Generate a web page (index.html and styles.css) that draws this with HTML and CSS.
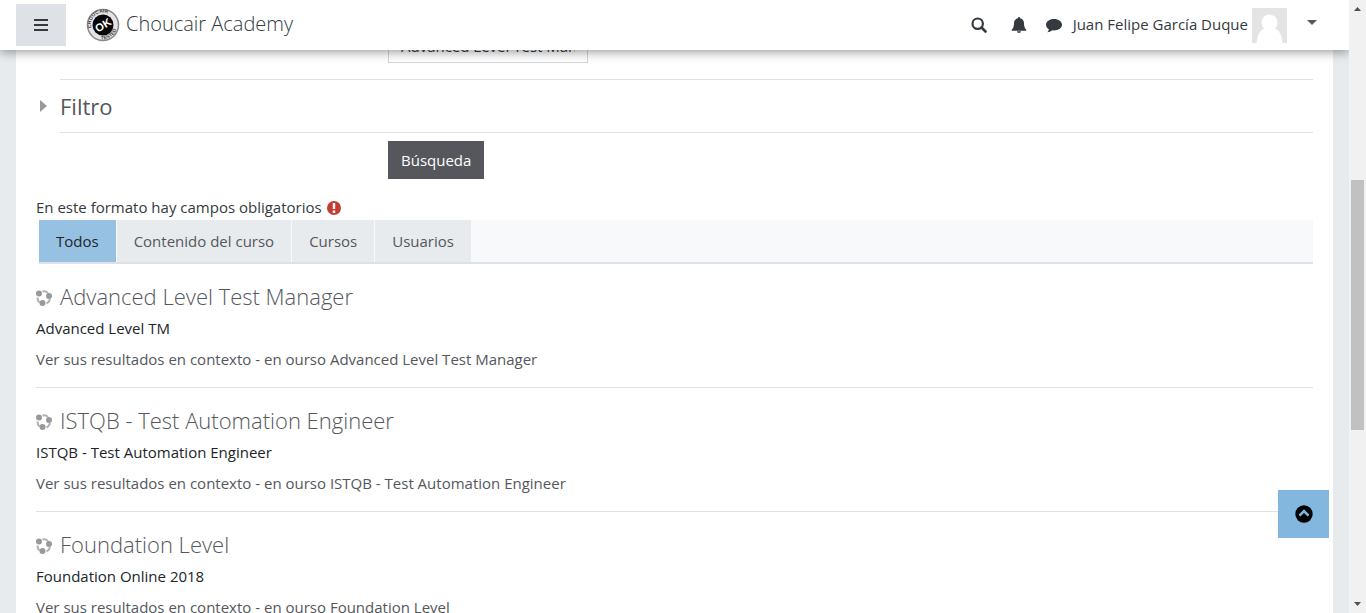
FILE: index.html
```html
<!DOCTYPE html>
<html lang="es">
<head>
<meta charset="utf-8">
<title>Choucair Academy</title>
<link rel="stylesheet" href="styles.css">
</head>
<body>
<svg class="defs" aria-hidden="true">
  <symbol id="course" viewBox="0 0 16 16">
    <g fill="none" stroke="#b0b0b0" stroke-width="2"><path d="M6.500 1.500Q9.500.7 12 2.900"/><path d="M14 9Q13.500 12 10.600 13.600"/><path d="M1.500 7.500Q1.300 10.500 3.500 12.500"/></g>
    <g fill="#999"><circle cx="3" cy="3.500" r="3"/><circle cx="13" cy="6" r="3"/><circle cx="6.500" cy="13" r="3"/></g>
  </symbol>
</svg>
<div class="app">
  <div class="page">
    <header class="topbar">
      <button class="menu" aria-label="Panel lateral"><svg width="14" height="12" viewBox="0 0 14 12"><path d="M0 1h14M0 6h14M0 11h14" stroke="#343a40" stroke-width="2"/></svg></button>
      <a class="brand" href="#">
        <svg width="34" height="34" viewBox="0 0 34 34" aria-hidden="true">
          <defs><path id="arc-top" d="M5.500 20A12 12 0 1 1 28.500 20"/><path id="arc-bottom" d="M12 31A15 15 0 0 0 31 14"/></defs>
          <circle cx="17" cy="17" r="15.500" fill="#e4e4e4" stroke="#888" stroke-width="1.500"/>
          <circle cx="17" cy="17" r="10.500" fill="#080808"/>
          <text class="seal"><textPath href="#arc-top">CHOUCAIR</textPath></text>
          <text class="seal"><textPath href="#arc-bottom" startOffset="3">TESTED</textPath></text>
          <text class="seal-ok" x="17" y="21" transform="rotate(-32 17 17)">OK</text>
        </svg>
        <span class="label">Choucair Academy</span>
      </a>
      <nav class="tools">
        <button class="tool" aria-label="Buscar"><svg width="16" height="16" viewBox="0 0 16 16"><circle cx="6.700" cy="6.700" r="5.200" fill="none" stroke="#343a40" stroke-width="2.200"/><path d="M10.500 10.500l4 4" stroke="#343a40" stroke-width="2.600" stroke-linecap="round"/></svg></button>
        <button class="tool" aria-label="Notificaciones"><svg width="16" height="16" viewBox="0 0 16 16" fill="#343a40"><path d="M8 0a1 1 0 0 1 1 1.200c2.500.5 4 2.300 4 4.800 0 3.500.6 5.200 2.300 6.800v1H.7v-1C2.400 11.200 3 9.500 3 6c0-2.500 1.500-4.300 4-4.800A1 1 0 0 1 8 0zM6 14.300h4a2 1.700 0 0 1-4 0z"/></svg></button>
        <button class="tool" aria-label="Mensajes"><svg width="16" height="16" viewBox="0 0 16 16" fill="#343a40"><path d="M8 2c4.500 0 8 2.500 8 5.700s-3.500 5.700-8 5.700l-1.700-.1C4.800 14.600 3 15.100 1.100 15.300c1-.9 1.700-1.900 1.700-3.100C1 11.100 0 9.500 0 7.700 0 4.500 3.500 2 8 2z"/></svg></button>
        <button class="user"><span class="label">Juan Felipe García Duque</span>
          <svg class="avatar" width="35" height="35" viewBox="0 0 35 35"><path fill="#e4e4e4" d="M0 0h35v35H0z"/><g fill="#fff"><circle cx="17.500" cy="14.500" r="8"/><path d="M4.500 35C5 27 8 22 12.500 20.500h10C27 22 30 27 30.500 35z"/></g></svg>
          <svg class="caret" width="10" height="5" viewBox="0 0 10 5"><path d="M0 0h10L5 5z" fill="#55585c"/></svg>
        </button>
      </nav>
    </header>
    <main class="panel">
      <form class="search">
        <div class="row"><input class="query" type="text" aria-label="Búsqueda" value="Advanced Level Test Manager"></div>
        <section class="filter"><h3><button type="button" class="toggle">Filtro</button></h3></section>
        <div class="row"><button type="button" class="submit">Búsqueda</button></div>
        <p class="required">En este formato hay campos obligatorios
          <svg width="14" height="14" viewBox="0 0 14 14" role="img" aria-label="Obligatorio"><circle cx="7" cy="7" r="7" fill="#c43d35"/><path d="M7 2v6M7 9.500v2.500" stroke="#fff" stroke-width="2.400"/></svg></p>
      </form>
      <nav class="tabs">
        <a class="tab active" href="#">Todos</a>
        <a class="tab" href="#">Contenido del curso</a>
        <a class="tab" href="#">Cursos</a>
        <a class="tab" href="#">Usuarios</a>
      </nav>
      <article class="result">
        <h4><svg width="16" height="16"><use href="#course"/></svg><a href="#">Advanced Level Test Manager</a></h4>
        <p>Advanced Level TM</p>
        <p class="context"><a href="#">Ver sus resultados en contexto</a> - <a href="#">en ourso Advanced Level Test Manager</a></p>
      </article>
      <article class="result">
        <h4><svg width="16" height="16"><use href="#course"/></svg><a href="#">ISTQB - Test Automation Engineer</a></h4>
        <p>ISTQB - Test Automation Engineer</p>
        <p class="context"><a href="#">Ver sus resultados en contexto</a> - <a href="#">en ourso ISTQB - Test Automation Engineer</a></p>
      </article>
      <article class="result">
        <h4><svg width="16" height="16"><use href="#course"/></svg><a href="#">Foundation Level</a></h4>
        <p>Foundation Online 2018</p>
        <p class="context"><a href="#">Ver sus resultados en contexto</a> - <a href="#">en ourso Foundation Level</a></p>
      </article>
    </main>
    <button class="to-top" aria-label="Volver arriba"><svg width="18" height="18" viewBox="0 0 18 18"><circle cx="9" cy="9" r="8.700"/><path d="M4.500 10.700L9 6.200l4.500 4.500" fill="none" stroke="#83b7de" stroke-width="2.600"/></svg></button>
  </div>
  <div class="scrollbar" aria-hidden="true">
    <svg width="7" height="4" viewBox="0 0 7 4"><path d="M0 4h7L3.500 0z" fill="#505050"/></svg>
    <div class="track"><div class="thumb"></div></div>
    <svg width="7" height="4" viewBox="0 0 7 4"><path d="M0 0h7L3.500 4z" fill="#505050"/></svg>
  </div>
</div>
</body>
</html>
```
FILE: styles.css
```css
* { box-sizing: border-box; }
body {
  margin: 0;
  font: 400 15px/24px "Open Sans", "Noto Sans", sans-serif;
  color: #343a40;
  background: #e7ebee;
}
button, input { font: inherit; color: inherit; }
button { border: 0; padding: 0; background: none; cursor: pointer; }
a { color: inherit; text-decoration: none; }
h3, h4, p { margin: 0; }
.defs { position: absolute; width: 0; height: 0; }

.app { display: flex; height: 100vh; overflow: hidden; }
.page { position: relative; flex: 1; min-width: 0; overflow: hidden; }

.topbar {
  position: absolute;
  top: 0;
  left: 0;
  right: 0;
  z-index: 1;
  display: flex;
  align-items: center;
  height: 50px;
  padding: 0 32px 0 16px;
  background: #fff;
  box-shadow: 0 2px 10px rgba(0, 0, 0, .4);
}
.menu { display: grid; place-items: center; width: 50px; height: 42px; background: #dee2e6; }
.brand { display: flex; align-items: center; gap: 6px; margin-left: 20px; font-size: 20px; font-weight: 300; }
.label { padding-bottom: 3px; }
.seal { font: bold 5px "Liberation Sans", sans-serif; fill: #444; }
.seal-ok { font: bold 11px "Liberation Sans", sans-serif; fill: #fff; text-anchor: middle; }
.tools { display: flex; align-items: center; margin-left: auto; }
.tool { display: grid; place-items: center; width: 16px; height: 24px; margin-right: 24px; }
.tool:nth-of-type(2) { margin-right: 19px; }
.tool:nth-of-type(3) { margin-right: 11px; }
.user { display: flex; align-items: center; }
.avatar { margin: 0 20px 0 4px; }
.caret { margin-bottom: 5px; }

.panel { min-height: 100%; margin: 0 16px; padding: 25px 20px 0; background: #fff; }
.row { padding-left: 352px; }
.query {
  display: block;
  width: 200px;
  height: 38px;
  padding: 4px 12px 0;
  border: 1px solid #ced4da;
  background: #fff;
}
.filter {
  margin: 16px 0 8px 24px;
  border: solid #dee2e6;
  border-width: 1px 0;
}
.filter h3 { display: flex; margin-left: -20px; font-size: 22px; line-height: 52px; font-weight: 400; }
.toggle { display: flex; align-items: center; gap: 13px; color: #55575d; }
.toggle::before { content: ""; border: 6px solid transparent; border-left: 7px solid #999; border-right: 0; }
.submit { display: block; height: 38px; padding: 0 13px; color: #fff; background: #55575d; }
.required { margin: 16px 0 1px; }
.required svg { margin-left: 1px; vertical-align: -2px; }

.tabs {
  display: flex;
  gap: 1px;
  margin-left: 3px;
  background: #f8f9fa;
  border-bottom: 2px solid #dee2e6;
}
.tab { padding: 9px 17px; background: #e7ebee; color: #55575d; }
.tab.active { background: #96c1e3; color: #212529; }

.result { padding-bottom: 16px; margin-bottom: 16px; border-bottom: 1px solid #dee2e6; }
.tabs + .result { margin-top: 16px; }
.result h4 { display: flex; align-items: center; gap: 8px; margin-bottom: 4px; font-size: 22px; line-height: 32px; font-weight: 300; color: #55575d; }
.result h4 svg { margin-top: 3px; }
.result p { color: #212529; }
.result .context { margin-top: 7px; color: #55575d; }

.to-top {
  position: absolute;
  right: 20px;
  bottom: 75px;
  display: grid;
  place-items: center;
  width: 51px;
  height: 48px;
  background: #83b7de;
}

.scrollbar { display: flex; flex-direction: column; align-items: center; width: 17px; padding: 7px 0; background: #f1f1f1; }
.track { flex: 1; width: 13px; padding: 6px 0; }
.thumb { height: 250px; margin-top: 163px; background: #c1c1c1; }
```
